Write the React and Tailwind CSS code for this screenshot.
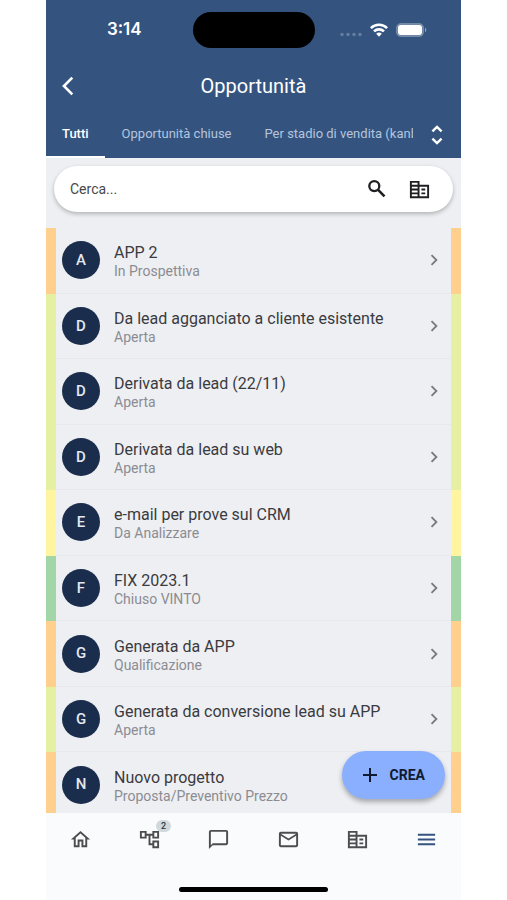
import {
  MdAdd,
  MdChatBubbleOutline,
  MdChevronRight,
  MdMailOutline,
  MdMenu,
  MdOutlineAccountTree,
  MdOutlineHome,
} from 'react-icons/md';

const opportunities = [
  { id: 1, name: 'APP 2', stage: 'In Prospettiva' },
  { id: 2, name: 'Da lead agganciato a cliente esistente', stage: 'Aperta' },
  { id: 3, name: 'Derivata da lead (22/11)', stage: 'Aperta' },
  { id: 4, name: 'Derivata da lead su web', stage: 'Aperta' },
  { id: 5, name: 'e-mail per prove sul CRM', stage: 'Da Analizzare' },
  { id: 6, name: 'FIX 2023.1', stage: 'Chiuso VINTO' },
  { id: 7, name: 'Generata da APP', stage: 'Qualificazione' },
  { id: 8, name: 'Generata da conversione lead su APP', stage: 'Aperta' },
  { id: 9, name: 'Nuovo progetto', stage: 'Proposta/Preventivo Prezzo' },
];

function CompanyIcon({ className }) {
  return (
    <svg className={className} viewBox="0 0 24 24" fill="currentColor" fillRule="evenodd">
      <path d="M12 7V3H2v18h20V7H12zM10 19H4v-2h6v2zm0-4H4v-2h6v2zm0-4H4V9h6v2zm0-4H4V5h6v2zm10 12h-8V9h8v10z" />
      <path d="M14 11h4v2h-4zM14 15h4v2h-4z" />
    </svg>
  );
}

const navItems = [
  { label: 'Home', icon: MdOutlineHome },
  { label: 'Processi', icon: MdOutlineAccountTree, badge: 2 },
  { label: 'Messaggi', icon: MdChatBubbleOutline },
  { label: 'Posta', icon: MdMailOutline },
  { label: 'Aziende', icon: CompanyIcon },
  { label: 'Menu', icon: MdMenu, active: true },
];

const getStageColor = (stage) => {
  if (stage === 'Aperta')        return 'border-[#e6f0a3]';
  if (stage === 'Da Analizzare') return 'border-[#fff5a0]';
  if (stage === 'Chiuso VINTO')  return 'border-[#a3d6a7]';
  return 'border-[#ffcf8e]';
};

function StatusBar() {
  return (
    <div className="grid grid-cols-[1fr_auto_1fr] items-center h-[59px]">
      <span className="pl-2.5 text-center font-['Inter',sans-serif] text-[17px] font-semibold">3:14</span>
      <div className="w-[122px] h-9 rounded-full bg-black" />
      <div className="flex items-center justify-end gap-2 pr-[34px]">
        <svg className="w-[22px] h-4" viewBox="0 0 22 16" fill="#fff" fillOpacity="0.25">
          <circle cx="2" cy="12.5" r="1.7" />
          <circle cx="8" cy="12.5" r="1.7" />
          <circle cx="14" cy="12.5" r="1.7" />
          <circle cx="20" cy="12.5" r="1.7" />
        </svg>
        <svg className="w-[18px] h-[14px]" viewBox="0 0 18 14" fill="none" stroke="#fff" strokeWidth="2.6">
          <path d="M0.9 5.1a11.6 11.6 0 0 1 16.2 0" />
          <path d="M4 8.4a7.2 7.2 0 0 1 10 0" />
          <path d="M9 13.8l-2.8-3a4 4 0 0 1 5.6 0z" fill="#fff" stroke="none" />
        </svg>
        <svg className="w-[31px] h-[14px]" viewBox="0 0 31 14" fill="#fff">
          <rect x="0.5" y="0.5" width="27" height="13" rx="4.2" fillOpacity="0.3" stroke="#fff" strokeOpacity="0.2" />
          <rect x="2" y="2" width="24" height="10" rx="3" />
          <path d="M29 4.6c1.8 0.8 1.8 4 0 4.8z" fillOpacity="0.45" />
        </svg>
      </div>
    </div>
  );
}

function OpportunityRow({ opportunity }) {
  return (
    <li className={`group flex border-x-10 ${getStageColor(opportunity.stage)}`}>
      <a
        href="#"
        className="flex flex-1 min-w-0 items-center gap-3.5 px-1.5 border-b border-[#e6e8ec] group-last:border-transparent"
      >
        <span className="flex items-center justify-center w-[38px] h-[38px] flex-shrink-0 rounded-full bg-[#1a2d4c] text-[15px] font-medium text-[#e3e8f2]">
          {opportunity.name[0].toUpperCase()}
        </span>
        <span className="flex-1 min-w-0 pt-1">
          <span className="block truncate text-base leading-[18px] text-[#3a3b3f]">{opportunity.name}</span>
          <span className="block truncate text-sm leading-[18px] text-[#8b8c91]">{opportunity.stage}</span>
        </span>
        <MdChevronRight className="w-[22px] h-[22px] flex-shrink-0 text-[#77787c]" />
      </a>
    </li>
  );
}

export default function App() {
  return (
    <div className="min-h-screen bg-white px-[46px] font-['Roboto',sans-serif]">
      <div className="flex flex-col h-screen">
        <header className="flex-shrink-0 bg-[#34547f] text-white">
          <StatusBar />
          <div className="grid grid-cols-[44px_1fr_44px] items-center h-[53px]">
            <button aria-label="Indietro" className="flex items-center justify-center h-full">
              <svg className="w-5 h-5" viewBox="0 0 20 20" fill="none" stroke="currentColor" strokeWidth="2.6">
                <path d="M14.3 1.6L5.9 10l8.4 8.4" />
              </svg>
            </button>
            <h1 className="text-center text-xl leading-6">Opportunità</h1>
          </div>
          <nav className="flex h-[46px] text-[13px] text-[#b4c4de]">
            <div className="flex flex-1 gap-px min-w-0 overflow-hidden mr-3 whitespace-nowrap">
              <a href="#" className="flex items-center px-4 border-b-2 border-white font-medium text-white">Tutti</a>
              <a href="#" className="flex items-center px-4 border-b-2 border-transparent">Opportunità chiuse</a>
              <a href="#" className="flex items-center px-4 border-b-2 border-transparent">Per stadio di vendita (kanban)</a>
            </div>
            <button aria-label="Tutte le viste" className="pr-3 text-white">
              <svg className="w-6 h-6" viewBox="0 0 24 24" fill="none" stroke="currentColor" strokeWidth="2.4">
                <path d="M7.4 8.4L12 3.9l4.6 4.5" />
                <path d="M7.4 15.6l4.6 4.5 4.6-4.5" />
              </svg>
            </button>
          </nav>
        </header>

        <main className="relative flex flex-col flex-1 min-h-0 bg-[#eeeff3]">
          <div className="flex items-center h-[46px] mx-2 mt-2 mb-4 px-4 flex-shrink-0 rounded-full bg-white shadow-[0_2px_4px_rgba(0,0,0,0.25)]">
            <input
              type="text"
              aria-label="Cerca"
              placeholder="Cerca..."
              className="flex-1 min-w-0 text-sm text-[#47484c] placeholder:text-[#47484c] outline-none"
            />
            <div className="flex items-center gap-5 pr-1.5 text-[#1f1f22]">
              <button aria-label="Avvia ricerca">
                <svg className="w-[22px] h-[22px]" viewBox="0 0 22 22" fill="none" stroke="currentColor" strokeWidth="2.3">
                  <circle cx="8.3" cy="8.1" r="5" />
                  <path d="M11.9 11.7l6.6 6.6" strokeWidth="2.6" />
                </svg>
              </button>
              <button aria-label="Aziende"><CompanyIcon className="w-[23px] h-[23px]" /></button>
            </div>
          </div>

          <div className="flex-1 min-h-0 overflow-hidden">
            <ul className="grid auto-rows-fr min-h-[590px]">
              {opportunities.map((opportunity) => (
                <OpportunityRow key={opportunity.id} opportunity={opportunity} />
              ))}
            </ul>
          </div>

          <button className="absolute right-4 bottom-3.5 flex items-center gap-2 h-12 pl-4 pr-5 rounded-full bg-[#8aafff] text-sm font-bold text-[#101a30] shadow-[0_3px_5px_rgba(0,0,0,0.3)]">
            <MdAdd className="w-6 h-6" />
            CREA
          </button>
        </main>

        <footer className="flex flex-col justify-between h-[87px] flex-shrink-0 bg-[#f9fbfd]">
          <nav className="grid grid-cols-6 h-[52px]">
            {navItems.map(({ label, icon: Icon, badge, active }) => (
              <a
                key={label}
                href="#"
                aria-label={label}
                className={`flex items-center justify-center ${active ? 'text-[#34547f]' : 'text-[#4c4d50]'}`}
              >
                <span className="relative">
                  <Icon className="w-[23px] h-[23px]" />
                  {badge && (
                    <span className="absolute -top-2 -right-2.5 px-[5px] rounded-full bg-[#cfd9dc] text-[9px] leading-3 font-medium text-[#33363a]">
                      {badge}
                    </span>
                  )}
                </span>
              </a>
            ))}
          </nav>
          <div className="w-[149px] h-[5px] mb-2 mx-auto rounded-full bg-black" />
        </footer>
      </div>
    </div>
  );
}
